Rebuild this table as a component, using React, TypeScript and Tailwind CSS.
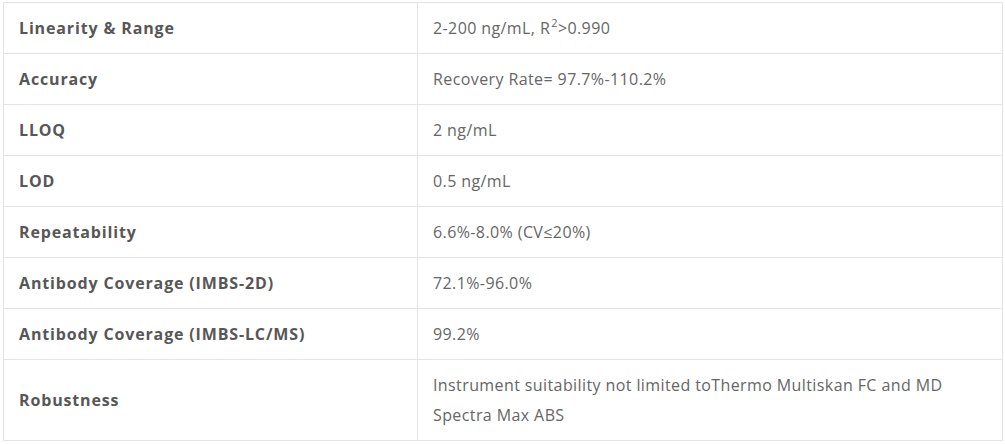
import React from 'react'

interface Row {
    label: string
    value: React.ReactNode
}

const rows: Row[] = [
    { label: 'Linearity & Range', value: <>2-200 ng/mL, R<sup className="text-[11px] leading-none relative -top-[7px] ml-[1px]">2</sup>&gt;0.990</> },
    { label: 'Accuracy', value: 'Recovery Rate= 97.7%-110.2%' },
    { label: 'LLOQ', value: '2 ng/mL' },
    { label: 'LOD', value: '0.5 ng/mL' },
    { label: 'Repeatability', value: '6.6%-8.0% (CV≤20%)' },
    { label: 'Antibody Coverage (IMBS-2D)', value: '72.1%-96.0%' },
    { label: 'Antibody Coverage (IMBS-LC/MS)', value: '99.2%' },
    { label: 'Robustness', value: 'Instrument suitability not limited toThermo Multiskan FC and MD Spectra Max ABS' },
]

const App: React.FC = () => {
    return (
        <div className="bg-white pt-[2px] pl-[3px] font-['Open_Sans',sans-serif]">
            <table className="w-[1000px] border-collapse table-fixed text-[16px] leading-[30px]">
                <colgroup>
                    <col className="w-[414px]" />
                    <col />
                </colgroup>
                <tbody>
                    {rows.map(row => (
                        <tr key={row.label}>
                            <td className="border border-[#e4e4e4] px-[15px] py-[10px] font-bold tracking-[0.85px] text-[#575757] align-middle">
                                {row.label}
                            </td>
                            <td className="border border-[#e4e4e4] px-[15px] py-[10px] tracking-[0.4px] text-[#666666] align-middle">
                                {row.value}
                            </td>
                        </tr>
                    ))}
                </tbody>
            </table>
        </div>
    )
}

export default App
